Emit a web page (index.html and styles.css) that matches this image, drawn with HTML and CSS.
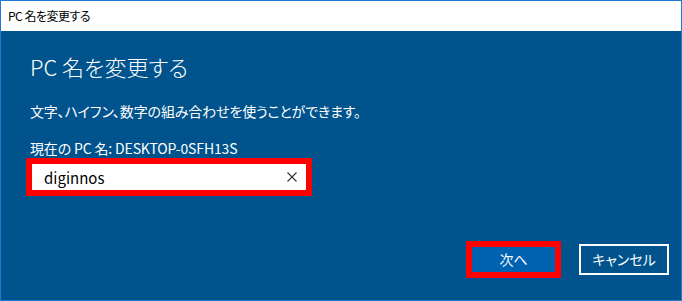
FILE: index.html
```html
<html>
<head>
<title>PC 名を変更する</title>
<link rel="stylesheet" href="styles.css">
</head>
<body>

<div class="window">
	<div class="titleBar">PC 名を変更する</div>

	<div class="content">
		<h1>PC 名を変更する</h1>
		<p class="note">文字、ハイフン、数字の組み合わせを使うことができます。</p>
		<p class="current">現在の PC 名: DESKTOP-0SFH13S</p>

		<div class="highlight">
			<div class="textBox">
				<span class="value">diginnos</span>
				<svg class="clear" width="10" height="10" viewBox="0 0 10 10">
					<path d="M0.5 0.5 L9.5 9.5 M9.5 0.5 L0.5 9.5" stroke="#333" stroke-width="1.1" fill="none"/>
				</svg>
			</div>
		</div>

		<div class="buttons">
			<div class="highlight">
				<div class="button primary">次へ</div>
			</div>
			<div class="button secondary">キャンセル</div>
		</div>
	</div>
</div>

</body>
</html>
```

FILE: styles.css
```css
body{
	margin: 0;
	font-family: "Noto Sans CJK JP", sans-serif;
	font-feature-settings: "palt";
}
.window{
	width: 680px;
	height: 299px;
	border: 1px solid #1f7ad0;
	display: flex;
	flex-direction: column;
}
.titleBar{
	height: 30px;
	background: #ffffff;
	color: #000000;
	font-size: 12px;
	line-height: 30px;
	padding-left: 7px;
	letter-spacing: -0.5px;
}
.content{
	flex: 1;
	background: #00538c;
	color: #ffffff;
	padding: 19px 12px 0 29px;
	display: flex;
	flex-direction: column;
}
h1{
	font-size: 22px;
	font-weight: 300;
	line-height: 32px;
	margin: 0;
}
p{
	margin: 0;
	font-size: 14px;
	line-height: 20px;
	letter-spacing: -0.15px;
}
.note{
	margin-top: 19px;
}
.current{
	margin-top: 17px;
}
.highlight{
	border: 6px solid #ff0000;
	display: inline-flex;
	align-self: flex-start;
}
.content > .highlight{
	margin-left: -4px;
	margin-top: 0;
}
.textBox{
	width: 253px;
	height: 26px;
	background: #ffffff;
	color: #000000;
	display: flex;
	align-items: center;
	padding: 0 9px 0 12px;
	font-size: 15px;
}
.value{
	flex: 1;
}
.buttons{
	margin-top: auto;
	margin-bottom: 22px;
	display: flex;
	justify-content: flex-end;
	align-items: center;
	gap: 18px;
}
.buttons .highlight{
	align-self: center;
}
.button{
	font-size: 14px;
	text-align: center;
	box-sizing: border-box;
}
.primary{
	width: 83px;
	height: 25px;
	line-height: 25px;
	background: #0063b1;
}
.secondary{
	width: 90px;
	height: 31px;
	line-height: 27px;
	border: 2px solid #ffffff;
}
```
